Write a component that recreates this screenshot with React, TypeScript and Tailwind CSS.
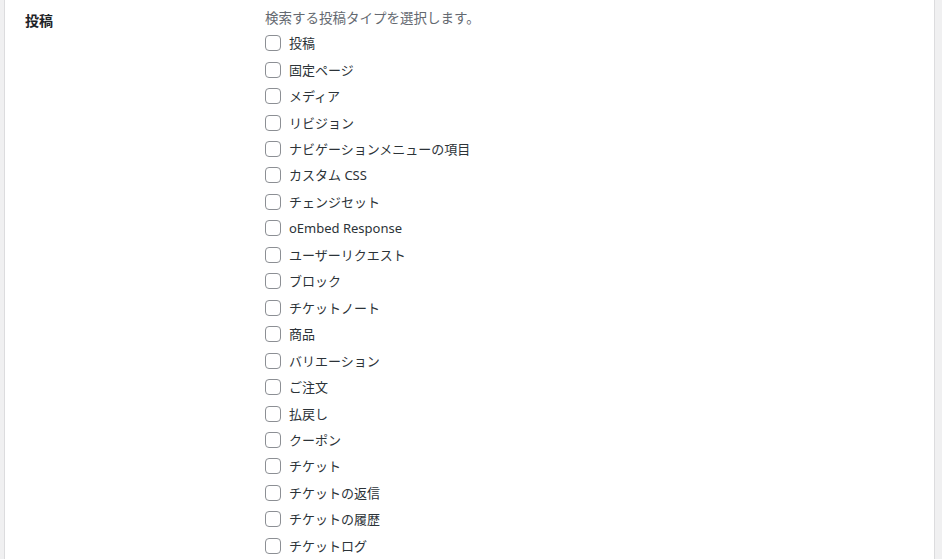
import { useState } from "react"

const postTypes = [
  "投稿",
  "固定ページ",
  "メディア",
  "リビジョン",
  "ナビゲーションメニューの項目",
  "カスタム CSS",
  "チェンジセット",
  "oEmbed Response",
  "ユーザーリクエスト",
  "ブロック",
  "チケットノート",
  "商品",
  "バリエーション",
  "ご注文",
  "払戻し",
  "クーポン",
  "チケット",
  "チケットの返信",
  "チケットの履歴",
  "チケットログ",
]

export default function App() {
  const [checked, setChecked] = useState<Record<string, boolean>>({})

  const toggle = (name: string) => {
    setChecked((prev) => ({ ...prev, [name]: !prev[name] }))
  }

  return (
    <div
      className="flex h-[559px] w-[942px] overflow-hidden bg-[#f0f0f1]"
      style={{ fontFamily: '"Noto Sans", "Noto Sans CJK JP", sans-serif' }}
    >
      <div className="ml-[4px] flex w-[931px] border-x border-[#dcdcde] bg-white">
        {/* Row label */}
        <div className="w-[260px] shrink-0 pl-[20px] pt-[8px]">
          <span className="text-[14px] font-bold leading-[18px] text-[#1d2327]">投稿</span>
        </div>

        {/* Checkbox list */}
        <div className="flex flex-col pt-[9px]">
          <p className="mb-[3px] text-[13.5px] leading-[18px] text-[#646970]">
            検索する投稿タイプを選択します。
          </p>
          {postTypes.map((name) => (
            <label key={name} className="flex h-[26.47px] cursor-pointer items-center">
              <input
                type="checkbox"
                checked={!!checked[name]}
                onChange={() => toggle(name)}
                className="h-[16px] w-[16px] shrink-0 appearance-none rounded-[4px] border border-[#8c8f94] bg-white checked:bg-[#2271b1]"
              />
              <span className="ml-[8px] text-[13px] leading-[18px] text-[#2c3338]">{name}</span>
            </label>
          ))}
        </div>
      </div>
    </div>
  )
}
